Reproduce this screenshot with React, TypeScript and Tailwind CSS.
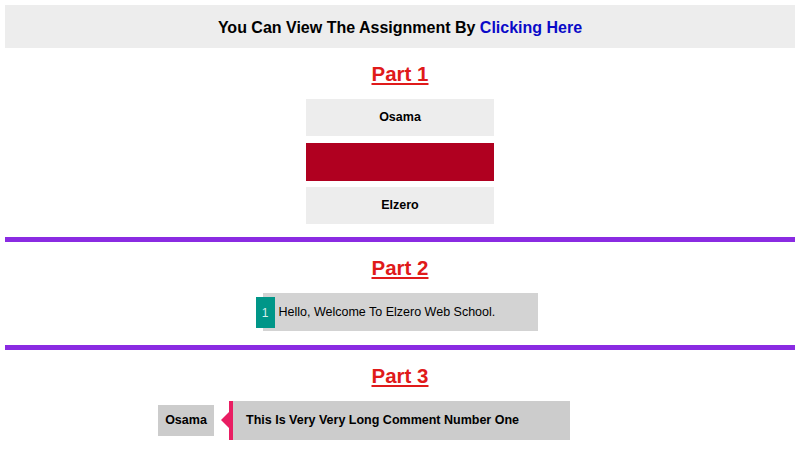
export default function App() {
  return (
    <div className="min-h-[450px] bg-white px-[5px] pt-[5px] font-['Liberation_Sans',Arial,sans-serif] text-black">
      <div className="flex h-[43px] items-center justify-center bg-[#ededed] pt-[3px] text-[16px] font-bold">
        <span>
          You Can View The Assignment By <a className="text-[#0a0ac8]">Clicking Here</a>
        </span>
      </div>

      <h2 className="mt-[13px] h-[25px] text-center text-[20.5px] leading-[25px] font-bold text-[#e01a1a] underline">Part 1</h2>
      <div className="mt-[13px] flex flex-col items-center">
        <div className="flex h-[37px] w-[188px] items-center justify-center bg-[#ededed] text-[12.5px] font-bold">Osama</div>
        <div className="mt-[7px] h-[38px] w-[188px] bg-[#b00020]"></div>
        <div className="mt-[6px] flex h-[37px] w-[188px] items-center justify-center bg-[#ededed] text-[12.5px] font-bold">Elzero</div>
      </div>

      <div className="mt-[13px] h-[5px] bg-[#8a2be2]"></div>

      <h2 className="mt-[13px] h-[25px] text-center text-[20.5px] leading-[25px] font-bold text-[#e01a1a] underline">Part 2</h2>
      <div className="mt-[13px] flex justify-center">
        <div className="relative flex h-[38px] w-[275px] items-center bg-[#d3d3d3] pl-[16px] text-[12.5px]">
          <span className="absolute top-[4px] left-[-7px] flex h-[31px] w-[19px] items-center justify-center bg-[#009688] text-[12px] text-[#d8f0ec]">1</span>
          Hello, Welcome To Elzero Web School.
        </div>
      </div>

      <div className="mt-[14px] h-[5px] bg-[#8a2be2]"></div>

      <h2 className="mt-[13px] h-[25px] text-center text-[20.5px] leading-[25px] font-bold text-[#e01a1a] underline">Part 3</h2>
      <div className="mt-[13px] flex items-center pl-[153px]">
        <div className="flex h-[31px] w-[56px] items-center justify-center bg-[#cccccc] text-[12.5px] font-bold">Osama</div>
        <div className="relative ml-[15px] flex h-[39px] w-[341px] items-center border-l-[4px] border-[#e91e63] bg-[#cccccc] pl-[13px] text-[12.5px] font-bold">
          <span className="absolute top-[11px] left-[-12px] h-0 w-0 border-y-[8px] border-r-[8px] border-y-transparent border-r-[#e91e63]"></span>
          This Is Very Very Long Comment Number One
        </div>
      </div>
    </div>
  );
}
